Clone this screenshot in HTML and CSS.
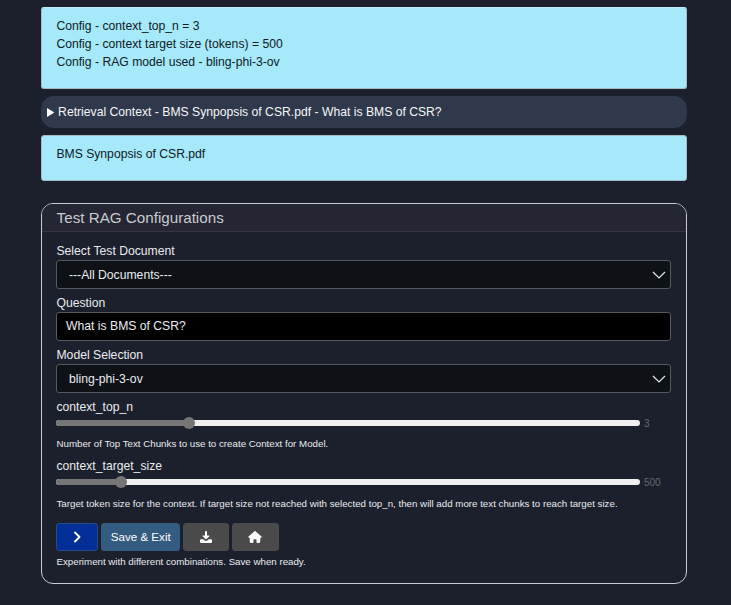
FILE: index.html
```html
<!DOCTYPE html>
<html lang="en">
<head>
<meta charset="utf-8">
<title>Test RAG Configurations</title>
<link rel="stylesheet" href="styles.css">
</head>
<body>
<main class="page">
  <section class="message message-config">
    <div class="line"><span>Config - context_top_n = 3</span></div>
    <div class="line"><span>Config - context target size (tokens) = 500</span></div>
    <div class="line"><span>Config - RAG model used - bling-phi-3-ov</span></div>
  </section>
  <section class="context">
    <svg class="marker" viewBox="0 0 8 8" preserveAspectRatio="none"><path d="M0 0L8 4L0 8Z" fill="#fff"/></svg>
    <span>Retrieval Context - BMS Synpopsis of CSR.pdf - What is BMS of CSR?</span>
  </section>
  <section class="message message-source">
    <div class="line"><span>BMS Synpopsis of CSR.pdf</span></div>
  </section>
  <section class="card">
    <h1 class="card-header"><span>Test RAG Configurations</span></h1>
    <div class="card-body">
      <label class="label">Select Test Document</label>
      <div class="field select"><span>---All Documents---</span><svg class="chevron" viewBox="0 0 14 8"><path d="M1 1L7 7L13 1"/></svg></div>
      <label class="label">Question</label>
      <div class="field input"><span>What is BMS of CSR?</span></div>
      <label class="label">Model Selection</label>
      <div class="field select"><span>bling-phi-3-ov</span><svg class="chevron" viewBox="0 0 14 8"><path d="M1 1L7 7L13 1"/></svg></div>
      <label class="label label-range">context_top_n</label>
      <div class="range">
        <div class="track"><div class="fill" style="width:133px"></div><div class="thumb"></div></div>
        <output>3</output>
      </div>
      <p class="help"><span>Number of Top Text Chunks to use to create Context for Model.</span></p>
      <label class="label label-size">context_target_size</label>
      <div class="range">
        <div class="track"><div class="fill" style="width:65px"></div><div class="thumb"></div></div>
        <output>500</output>
      </div>
      <p class="help"><span>Target token size for the context. If target size not reached with selected top_n, then will add more text chunks to reach target size.</span></p>
      <div class="buttons">
        <button class="btn run" aria-label="Run"><svg width="8" height="12" viewBox="0 0 8 12"><path d="M2 1.500L6.500 6L2 10.500" fill="none" stroke="#fff" stroke-width="1.9" stroke-linecap="round" stroke-linejoin="round"/></svg></button>
        <button class="btn save"><span>Save &amp; Exit</span></button>
        <button class="btn download" aria-label="Download"><svg width="12" height="12" viewBox="0 0 12 12"><path fill="#fff" d="M5 1a1 1 0 0 1 2 0v3.500h1.900q1 .1.300.9L6.500 8.100q-.5.450-1 0L2.800 5.400q-.7-.8.300-.9H5zM1 8.200h2.200l1.500 1.400q1.300.9 2.600 0l1.500-1.400H11a1 1 0 0 1 1 1V11a1 1 0 0 1-1 1H1a1 1 0 0 1-1-1V9.200a1 1 0 0 1 1-1z"/></svg></button>
        <button class="btn home" aria-label="Home"><svg width="14" height="12" viewBox="0 0 576 512"><path fill="#fff" d="M576 256c0 18-15 32-32 32h-32v160c0 36-28 64-64 64h-56c-22 0-40-18-40-40v-88c0-18-14-32-32-32h-64c-18 0-32 14-32 32v88c0 22-18 40-40 40h-56c-36 0-64-28-64-64V288H32c-18 0-32-14-32-32 0-9 3-17 10-24L266 8c14-11 30-11 43 0l256 224c8 7 12 15 11 24z"/></svg></button>
      </div>
      <p class="note"><span>Experiment with different combinations. Save when ready.</span></p>
    </div>
  </section>
</main>
</body>
</html>
```

FILE: styles.css
```css
* { box-sizing: border-box; }
body { margin: 0; background: #1c1f2c; color: #e9ecef; font: 12.180px/18px "Liberation Sans", Arial, sans-serif; }
.page { width: 646px; height: 605px; margin-left: 40.600px; padding-top: 7px; }
.message { padding: 9px 14.800px; color: #10191d; background: #a5e9fb; border: 1px solid #a3bac8; border-radius: 3px; }
.message-config { height: 82px; border-top-color: #b8edfa; }
.message-source { height: 46px; }
.line { height: 18px; }
.context { display: flex; align-items: center; gap: 4px; height: 32px; margin: 7px 0; padding-left: 6px; border-radius: 13px; background: #30384b; color: #f5f6f8; }
.marker { width: 7.500px; height: 9px; }
.card { height: 381px; margin-top: 22px; border: 1px solid #c9ccd8; border-radius: 12px; overflow: hidden; }
.card-header { height: 28px; margin: 0; padding-left: 15px; font-size: 15.200px; font-weight: 400; line-height: 27px; color: #cacbd0; background: #242633; border-bottom: 1px solid #333541; }
.card-body { padding: 11px 15px 0 14.900px; }
.label { display: block; height: 17px; line-height: 17px; }
.field { display: flex; align-items: center; justify-content: space-between; height: 29px; margin-bottom: 6px; border: 1px solid #555a60; border-radius: 3px; }
.select { padding: 0 4px 0 11.500px; background: #0e1216; }
.input { padding: 0 0 1px 8.600px; background: #000; }
.chevron { width: 14px; height: 8px; fill: none; stroke: #e4e6e8; stroke-width: 1.200; }
.range { display: flex; align-items: center; height: 12px; gap: 4px; }
.label-range, .label-size { margin-bottom: 1px; }
.track { display: flex; align-items: center; width: 583.500px; height: 6px; border-radius: 3px; background: #efefef; }
.fill { height: 6px; border-radius: 3px 0 0 3px; background: #767676; }
.thumb { width: 12px; height: 12px; margin-left: -6px; border-radius: 50%; background: #767676; }
output { padding-top: 1px; color: #646970; font-size: 10px; }
.help { margin: 7px 0 6px; font-size: 9.740px; line-height: 16px; white-space: nowrap; }
.help:nth-of-type(2) { margin: 8px 0 0; }
.buttons { display: flex; gap: 3px; margin-top: 11px; }
.btn { display: flex; align-items: center; justify-content: center; height: 28px; padding: 0; border: 1px solid #4a4d50; border-radius: 3px; color: #fff; background: #4a4a4a; font: inherit; }
.run { width: 42px; background: #032e98; border-color: #254b88; }
.save { width: 78.500px; padding-bottom: 1px; font-size: 11.600px; background: #345b80; border-color: #345b80; }
.download { width: 46px; }
.home { width: 47px; }
.note { margin: 3px 0 0; font-size: 9.730px; line-height: 16px; }
```
